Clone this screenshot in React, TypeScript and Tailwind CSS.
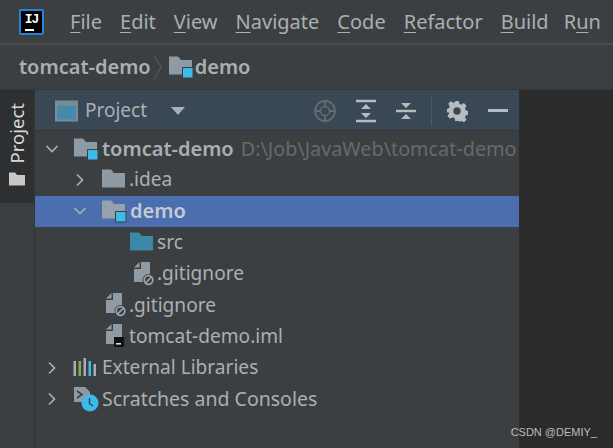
import React from 'react';

const FolderIcon = ({ color = '#8f9ba4', badge = false, badgeColor = '#3dbbe8' }: { color?: string; badge?: boolean; badgeColor?: string }) => (
  <svg width="26" height="24" viewBox="0 0 26 24" className="shrink-0">
    <path d="M1 1.500h9l3 3.500h11V19.500H1z" fill={color} />
    {badge && <rect x="14.500" y="12.500" width="10.500" height="10.500" fill={badgeColor} stroke="#3c3f41" strokeWidth="1" />}
  </svg>
);

const FileIcon = ({ kind }: { kind: 'ignore' | 'iml' }) => (
  <svg width="26" height="26" viewBox="0 0 26 26" className="shrink-0">
    <path d="M10 1h9v20H3V8h7z" fill="#8f9ba4" />
    <path d="M3 6.500 8.500 1v5.500z" fill="#8f9ba4" />
    {kind === 'ignore' ? (
      <g>
        <circle cx="17.500" cy="19" r="6" fill="#3c3f41" />
        <circle cx="17.500" cy="19" r="4.300" fill="none" stroke="#9aa5ad" strokeWidth="1.700" />
        <path d="m14.500 22 6-6" stroke="#9aa5ad" strokeWidth="1.700" />
      </g>
    ) : (
      <g>
        <rect x="11" y="14" width="10" height="10" fill="#111" />
        <rect x="13" y="20" width="5" height="1.600" fill="#ddd" />
      </g>
    )}
  </svg>
);

const LibrariesIcon = () => (
  <svg width="24" height="20" viewBox="0 0 24 20" className="shrink-0">
    <rect x="0.500" y="3" width="2.500" height="15" fill="#a4adb3" />
    <rect x="5.500" y="3" width="2.500" height="15" fill="#7cb342" />
    <rect x="10.500" y="0" width="2.500" height="18" fill="#a4adb3" />
    <rect x="15.500" y="3" width="2.500" height="15" fill="#3dbbe8" />
    <rect x="20.500" y="6" width="2.500" height="12" fill="#a4adb3" />
  </svg>
);

const ScratchIcon = () => (
  <svg width="26" height="26" viewBox="0 0 26 26" className="shrink-0">
    <path d="M1 1h11l5 5v10H1z" fill="#8f9ba4" />
    <path d="m4 5 5 3.500L4 12" fill="none" stroke="#3c3f41" strokeWidth="1.600" />
    <circle cx="17" cy="17" r="8.500" fill="#3dbbe8" />
    <path d="M16.500 12V17.500L20 20" fill="none" stroke="#2f4a5a" strokeWidth="1.500" />
  </svg>
);

const Chevron = ({ open }: { open: boolean }) => (
  <svg width="14" height="14" viewBox="0 0 14 14" className="shrink-0">
    {open ? (
      <path d="M1.500 4 7 9.500 12.500 4" fill="none" stroke="#a9b0b5" strokeWidth="1.700" />
    ) : (
      <path d="M4 1.500 9.500 7 4 12.500" fill="none" stroke="#a9b0b5" strokeWidth="1.700" />
    )}
  </svg>
);

const Menu = ({ first, rest }: { first: string; rest: string }) => (
  <span>
    <span className="underline underline-offset-[3px] decoration-1">{first}</span>
    {rest}
  </span>
);

const rowText = 'text-[19.100px] leading-none text-[#a9b0b3] whitespace-nowrap';

const Row = ({ indent, chevron, icon, children, selected }: { indent: string; chevron?: 'open' | 'closed'; icon: React.ReactNode; children: React.ReactNode; selected?: boolean }) => (
  <div className={`h-[31.300px] flex items-center ${indent} ${selected ? 'bg-[#4b6eaf]' : ''}`}>
    {chevron && (
      <span className="w-[28px] shrink-0 flex">
        <Chevron open={chevron === 'open'} />
      </span>
    )}
    {icon}
    {children}
  </div>
);

export default function App() {
  return (
    <div className="w-[613px] h-[448px] overflow-hidden flex flex-col bg-[#3c3f41] text-[#a9b0b3] relative" style={{ fontFamily: '"Noto Sans", sans-serif' }}>
      <header className="h-[45px] shrink-0 flex items-center border-b-2 border-[#4a4c4e]">
        <div className="ml-[19px] w-[25px] h-[26px] bg-black border-2 border-[#2a7fd8] rounded-[2px] flex flex-col items-center shrink-0">
          <span className="text-white text-[13px] font-bold leading-none mt-[2px] tracking-[-1px]" style={{ fontFamily: '"Liberation Mono", monospace' }}>IJ</span>
          <span className="w-[9px] h-[2px] bg-white mt-[3px] mr-[4px]"></span>
        </div>
        <nav className="ml-[26px] flex gap-[18px] text-[20px] leading-none text-[#a9b0b3]">
          <Menu first="F" rest="ile" />
          <Menu first="E" rest="dit" />
          <Menu first="V" rest="iew" />
          <Menu first="N" rest="avigate" />
          <Menu first="C" rest="ode" />
          <Menu first="R" rest="efactor" />
          <Menu first="B" rest="uild" />
          <span className="-ml-[3px]">R<span className="underline underline-offset-[3px] decoration-1">u</span>n</span>
        </nav>
      </header>

      <div className="h-[45px] shrink-0 flex items-center pl-[19px] border-b border-[#333537]">
        <span className="text-[20px] font-semibold leading-none text-[#a9b0b3]">tomcat-demo</span>
        <svg width="10" height="26" viewBox="0 0 10 26" className="ml-[2px] mr-[5px] shrink-0">
          <path d="m1 1 7 12-7 12" fill="none" stroke="#55585a" strokeWidth="1.200" />
        </svg>
        <FolderIcon badge />
        <span className="ml-[1px] text-[20px] font-semibold leading-none text-[#a9b0b3]">demo</span>
      </div>

      <div className="flex-1 flex min-h-0">
        <aside className="w-[35px] shrink-0 border-r border-[#323436]">
          <div className="h-[113px] bg-[#2d2f30] flex flex-col items-center pt-[13px]">
            <span className="text-[18.500px] leading-none text-[#d4d7d9] [writing-mode:vertical-rl] rotate-180">Project</span>
            <svg width="18" height="16" viewBox="0 0 18 16" className="mt-[8px]">
              <path d="M1 1.500h6l2 2.500h8v10.500H1z" fill="#c8c9c9" />
            </svg>
          </div>
        </aside>

        <main className="w-[484px] shrink-0 flex flex-col min-w-0 overflow-hidden">
          <div className="h-[41px] shrink-0 flex items-center bg-[#3a4755] border-b border-[#323436] pt-[1px]">
            <svg width="24" height="22" viewBox="0 0 24 22" className="ml-[20px] shrink-0">
              <rect x="1" y="1.500" width="21" height="19" fill="#448aab" stroke="#7d8b95" strokeWidth="2" />
              <rect x="2" y="2.500" width="19" height="3" fill="#7d8b95" />
            </svg>
            <span className="ml-[6px] text-[19px] leading-none text-[#a9b0b3]">Project</span>
            <svg width="14" height="8" viewBox="0 0 14 8" className="ml-[24px] shrink-0">
              <path d="M0 0h14L7 8z" fill="#a9b0b3" />
            </svg>
            <svg width="24" height="24" viewBox="0 0 24 24" className="ml-[128px] shrink-0">
              <circle cx="12" cy="12" r="10" fill="none" stroke="#666b6e" strokeWidth="1.800" />
              <circle cx="12" cy="12" r="4.500" fill="none" stroke="#666b6e" strokeWidth="1.500" />
              <path d="M12 2v5M12 17v5M2 12h5M17 12h5" stroke="#666b6e" strokeWidth="1.800" />
            </svg>
            <svg width="20" height="24" viewBox="0 0 20 24" className="ml-[19px] shrink-0">
              <path d="M0 2h20M0 22h20" stroke="#b5bbbf" strokeWidth="2.500" />
              <path d="m10 5 5 5H5zM10 19l5-5H5z" fill="#b5bbbf" />
            </svg>
            <svg width="20" height="24" viewBox="0 0 20 24" className="ml-[20px] shrink-0">
              <path d="M0 12h20" stroke="#b5bbbf" strokeWidth="2.500" />
              <path d="m10 9 5-5H5zM10 15l5 5H5z" fill="#b5bbbf" />
            </svg>
            <span className="ml-[15px] w-px h-[30px] bg-[#505a64] shrink-0"></span>
            <svg width="22" height="22" viewBox="0 0 24 24" className="ml-[14px] shrink-0">
              <path fillRule="evenodd" d="M10 1h4l.7 3.200 2 .9 2.800-1.700 2.900 2.900-1.700 2.800.8 2 2.500.9v4l-2.500.8-.8 2 1.700 2.800-2.900 2.900-2.800-1.700-2 .8L14 23h-4l-.7-3.400-2-.8-2.800 1.700-2.900-2.900 1.700-2.800-.8-2L1 13.900v-4l2.300-.9.8-2-1.700-2.800 2.900-2.900 2.800 1.700 2-.9zM12 8a4 4 0 1 0 0 8 4 4 0 0 0 0-8z" fill="#b5bbbf" />
            </svg>
            <span className="ml-[20px] w-[20px] h-[3px] bg-[#b5bbbf] shrink-0"></span>
          </div>

          <div className="pt-[2px]">
            <Row indent="pl-[10px]" chevron="open" icon={<FolderIcon badge />}>
              <span className="ml-[3px] text-[20px] leading-none font-semibold text-[#a9b0b3] whitespace-nowrap">tomcat-demo</span>
              <span className="ml-[7px] text-[19.800px] leading-none text-[#666a6c] whitespace-nowrap">D:\Job\JavaWeb\tomcat-demo</span>
            </Row>
            <Row indent="pl-[38px]" chevron="closed" icon={<FolderIcon />}>
              <span className={`ml-[2px] ${rowText}`}>.idea</span>
            </Row>
            <Row indent="pl-[38px]" chevron="open" icon={<FolderIcon color="#95a1ad" badge badgeColor="#3dbbe8" />} selected>
              <span className="ml-[3px] text-[20px] leading-none font-semibold text-[#c4cad0] whitespace-nowrap">demo</span>
            </Row>
            <Row indent="pl-[94px]" icon={<FolderIcon color="#3b88a8" />}>
              <span className={`ml-[2px] ${rowText}`}>src</span>
            </Row>
            <Row indent="pl-[96px]" icon={<FileIcon kind="ignore" />}>
              <span className={`${rowText}`}>.gitignore</span>
            </Row>
            <Row indent="pl-[68px]" icon={<FileIcon kind="ignore" />}>
              <span className={`${rowText}`}>.gitignore</span>
            </Row>
            <Row indent="pl-[68px]" icon={<FileIcon kind="iml" />}>
              <span className={`${rowText}`}>tomcat-demo.iml</span>
            </Row>
            <Row indent="pl-[10px]" chevron="closed" icon={<LibrariesIcon />}>
              <span className={`ml-[5px] ${rowText}`}>External Libraries</span>
            </Row>
            <Row indent="pl-[10px]" chevron="closed" icon={<ScratchIcon />}>
              <span className="ml-[3px] text-[19.500px] leading-none text-[#a9b0b3] whitespace-nowrap">Scratches and Consoles</span>
            </Row>
          </div>
        </main>

        <div className="flex-1 bg-[#2b2b2b]"></div>
      </div>

      <span className="absolute right-[16px] bottom-[10px] text-[11px] leading-none text-[#bdbdbd]" style={{ fontFamily: '"Liberation Sans", sans-serif' }}>CSDN @DEMIY_</span>
    </div>
  );
}
